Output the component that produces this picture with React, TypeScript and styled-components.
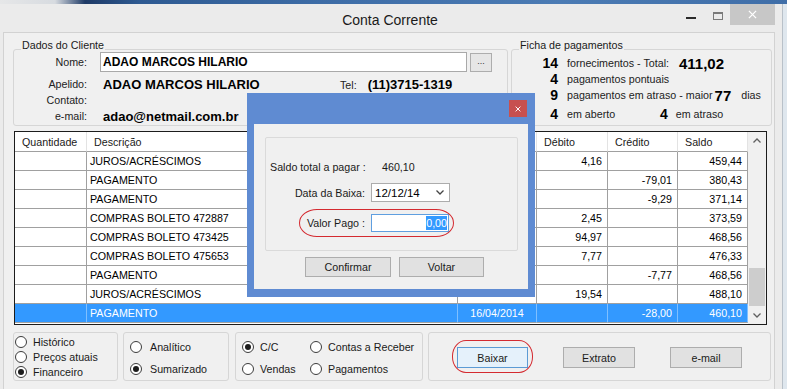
import React from "react";
import styled, { createGlobalStyle } from "styled-components";

const Global = createGlobalStyle`
  html, body { margin: 0; padding: 0; }
  body {
    width: 787px; height: 389px; overflow: hidden;
    background: #d9e2ea;
    font-family: "Liberation Sans", Arial, sans-serif;
    font-size: 10.7px; color: #000;
  }
  #root { width: 787px; height: 389px; }
`;

const Screen = styled.div`
  position: relative;
  width: 787px; height: 389px; overflow: hidden;
  display: flex; flex-direction: column;
`;

const DesktopTop = styled.div`
  height: 4px; flex: none;
  background: linear-gradient(90deg, #e6e7e8 0px, #d7dbe0 55px, #1e3a66 85px, #2e5a92 140px, #3d6ca6 320px, #4b7bb4 560px, #3f6ea8 787px);
`;

const Body = styled.div`
  flex: 1; display: flex; min-height: 0;
`;

const Window = styled.div`
  width: 783px; flex: none;
  background: #ebebeb;
  border-right: 1px solid #b9c1c9;
  box-sizing: border-box;
  display: flex; flex-direction: column;
  padding: 0 7px 0 3px;
`;

const DesktopRight = styled.div`
  flex: 1; background: #dfe7ee;
`;

const TitleBar = styled.div`
  height: 28px; flex: none;
  display: grid; grid-template-columns: 1fr auto 1fr;
  align-items: center;
`;

const Title = styled.div`
  grid-column: 2;
  font-size: 14px; color: #1a1a1a;
  padding: 4px 0 0 2px;
`;

const Controls = styled.div`
  grid-column: 3; justify-self: end; align-self: start;
  display: flex; align-items: flex-start; height: 28px;
`;

const MinGlyph = styled.span`
  width: 10px; height: 2px; background: #2a2a2a;
  margin-top: 13px; margin-right: 17px;
`;

const MaxGlyph = styled.span`
  width: 8px; height: 5px;
  border: 1px solid #7a7a7a; border-top-width: 2px;
  margin-top: 8px; margin-right: 7px;
`;

const CloseBtn = styled.span`
  width: 45px; height: 21px; background: #c7c7c7;
  display: flex; align-items: center; justify-content: center;
`;

const Client = styled.div`
  flex: 1;
  background: #f0f0f0;
  border: 1px solid #d2d2d2; border-bottom: none;
  display: flex; flex-direction: column;
`;

const TopRow = styled.div`
  display: flex; gap: 3px;
  margin-top: 16px; padding-left: 9px;
`;

const Group = styled.div<{ $w: number; $h: number; $ml?: number }>`
  position: relative; flex: none;
  width: ${(p) => p.$w}px; height: ${(p) => p.$h}px;
  margin-left: ${(p) => p.$ml || 0}px;
  box-sizing: border-box;
  border: 1px solid #d6d6d6; border-radius: 3px;
`;

const Legend = styled.span`
  position: absolute; left: 7px; top: -11px;
  line-height: 13px; padding: 0 1px;
  background: #f0f0f0; color: #1a1a1a;
`;

const Stack = styled.div<{ $pt: number }>`
  display: flex; flex-direction: column;
  padding-top: ${(p) => p.$pt}px;
`;

const FormRow = styled.div<{ $h: number; $mt?: number }>`
  display: flex; align-items: center;
  height: ${(p) => p.$h}px;
  margin-top: ${(p) => p.$mt || 0}px;
  white-space: nowrap;
`;

const Label = styled.span`
  width: 73px; flex: none; margin-right: 13px;
  text-align: right; color: #222;
`;

const TextInput = styled.div`
  width: 367px; height: 20px; box-sizing: border-box;
  border: 1px solid #a9a9a9; background: #fff;
  font-weight: bold; font-size: 12px;
  display: flex; align-items: center; padding-left: 2px;
`;

const SmallBtn = styled.div`
  width: 22px; height: 19px; box-sizing: border-box;
  margin-left: 3px;
  border: 1px solid #adadad; background: #e6e6e6;
  display: flex; align-items: center; justify-content: center;
  font-size: 9px; color: #333; padding-bottom: 3px;
`;

const BigValue = styled.span<{ $w?: number }>`
  font-weight: bold; font-size: 13px;
  padding-left: 3px;
  width: ${(p) => (p.$w ? `${p.$w}px` : "auto")};
  flex: none;
`;

const TelLabel = styled.span`
  color: #222; margin-right: 8px; margin-top: 2px;
`;

const NumCol = styled.span`
  width: 46px; flex: none; margin-right: 9px;
  text-align: right; font-weight: bold; font-size: 14px;
`;

const Num = styled.span<{ $size?: number; $ml?: number }>`
  font-weight: bold; font-size: ${(p) => p.$size || 14}px;
  margin-left: ${(p) => p.$ml || 0}px;
`;

const Txt = styled.span<{ $ml?: number; $w?: number }>`
  color: #222;
  margin-left: ${(p) => p.$ml || 0}px;
  ${(p) => (p.$w ? `width:${p.$w}px; flex:none;` : "")}
`;

const Table = styled.div`
  margin-top: 5px; margin-left: 10px;
  width: 753px; height: 194px; box-sizing: border-box;
  border: 1px solid #1c1c1c; background: #fff;
  display: flex;
`;

const Grid = styled.div`
  width: 733px; flex: none;
  display: grid;
  grid-template-columns: 72px 371px 79px 71px 70px 70px;
  grid-template-rows: 20px repeat(9, 19px);
`;

const HeadCell = styled.div`
  box-sizing: border-box;
  border-bottom: 1px solid #a0a0a0;
  border-right: 1px solid #e3e3e3;
  display: flex; align-items: center; padding-left: 7px;
  color: #1a1a1a;
`;

const Cell = styled.div<{ $right?: boolean; $center?: boolean; $sel?: boolean }>`
  box-sizing: border-box;
  border-bottom: 1px solid #a0a0a0;
  border-right: 1px solid ${(p) => (p.$sel ? "#7fbfff" : "#a0a0a0")};
  background: ${(p) => (p.$sel ? "#3399ff" : "#fff")};
  color: ${(p) => (p.$sel ? "#fff" : "#000")};
  display: flex; align-items: center;
  justify-content: ${(p) => (p.$right ? "flex-end" : p.$center ? "center" : "flex-start")};
  padding: ${(p) => (p.$right ? "0 5px 0 0" : p.$center ? "0" : "0 0 0 3px")};
  white-space: nowrap; overflow: hidden;
`;

const ScrollBar = styled.div`
  flex: 1; background: #f0f0f0;
  display: flex; flex-direction: column; align-items: center;
`;

const ScrollArrow = styled.div`
  height: 17px; width: 100%;
  display: flex; align-items: center; justify-content: center;
`;

const ScrollTrack = styled.div`
  flex: 1; width: 100%; box-sizing: border-box; padding: 0 1px;
  display: flex; flex-direction: column; justify-content: flex-end;
`;

const Thumb = styled.div`
  height: 38px; background: #cdcdcd; margin-bottom: 1px;
`;

const BottomRow = styled.div`
  display: flex; margin-top: 7px; padding-left: 9px;
`;

const RadioStack = styled.div<{ $pt: number; $pl: number; $gap: number }>`
  display: flex; flex-direction: column;
  padding-top: ${(p) => p.$pt}px; padding-left: ${(p) => p.$pl}px;
  gap: ${(p) => p.$gap}px;
`;

const RadioGrid = styled.div`
  display: grid; grid-template-columns: 68px auto;
  row-gap: 6px; padding-top: 6px; padding-left: 6px;
`;

const RadioRow = styled.label<{ $h: number }>`
  display: flex; align-items: center; height: ${(p) => p.$h}px;
  white-space: nowrap; color: #1a1a1a;
`;

const RadioCircle = styled.span<{ $on?: boolean; $gap: number }>`
  width: 12px; height: 12px; box-sizing: border-box; flex: none;
  border-radius: 50%; border: 1px solid #3c3c3c;
  background: #fff; margin-right: ${(p) => p.$gap}px;
  display: flex; align-items: center; justify-content: center;
  &::after {
    content: "";
    width: 6px; height: 6px; border-radius: 50%;
    background: ${(p) => (p.$on ? "#1c1c1c" : "transparent")};
  }
`;

const ButtonRow = styled.div`
  display: flex; padding-left: 28px; padding-top: 14px; gap: 35px;
`;

const WinButton = styled.div<{ $w: number; $h: number; $focus?: boolean }>`
  width: ${(p) => p.$w}px; height: ${(p) => p.$h}px; box-sizing: border-box;
  border: 1px solid ${(p) => (p.$focus ? "#5b9bd5" : "#adadad")};
  background: ${(p) => (p.$focus ? "#e5f1fb" : "#e1e1e1")};
  display: flex; align-items: center; justify-content: center;
  color: #1a1a1a;
`;

const Dialog = styled.div`
  position: absolute; left: 247px; top: 93px;
  width: 288px; height: 204px; box-sizing: border-box;
  background: #5f8bd2;
  padding: 31px 7px 8px 7px;
  display: flex;
`;

const DialogClose = styled.div`
  position: absolute; right: 8px; top: 7px;
  width: 18px; height: 17px; background: #c75050;
  display: flex; align-items: center; justify-content: center;
`;

const DialogInner = styled.div`
  flex: 1; background: #f0f0f0;
  padding: 13px 0 0 11px;
  display: flex; flex-direction: column;
`;

const DialogGroup = styled.div`
  width: 253px; height: 114px; box-sizing: border-box;
  border: 1px solid #dadada; border-radius: 2px;
  display: flex; flex-direction: column;
  padding: 19px 0 0 4px;
`;

const DLabel = styled.span`
  width: 95px; flex: none; margin-right: 6px;
  text-align: right; color: #1a1a1a; white-space: nowrap;
`;

const DValue = styled.span`
  padding-left: 11px; color: #1a1a1a;
`;

const Select = styled.div`
  width: 79px; height: 19px; box-sizing: border-box;
  border: 1px solid #acacac; background: #fff;
  display: flex; align-items: center; justify-content: space-between;
  padding: 0 5px 0 3px; font-size: 11.5px;
`;

const ValueInput = styled.div`
  width: 78px; height: 18px; box-sizing: border-box;
  border: 1px solid #5f9fe0; background: #fff;
  display: flex; align-items: center; justify-content: flex-end;
  padding-right: 1px;
`;

const Selected = styled.span`
  background: #3399ff; color: #fff; padding: 1px 0;
`;

const DialogButtons = styled.div`
  display: flex; gap: 8px; margin-top: 6px; padding-left: 40px;
`;

const Annotation = styled.div<{ $l: number; $t: number; $w: number; $h: number; $r: string }>`
  position: absolute;
  left: ${(p) => p.$l}px; top: ${(p) => p.$t}px;
  width: ${(p) => p.$w}px; height: ${(p) => p.$h}px;
  box-sizing: border-box;
  border: 1px solid #d42a30; border-radius: ${(p) => p.$r};
  pointer-events: none;
`;

type Row = { d: string; dt?: string; deb?: string; cred?: string; saldo: string; sel?: boolean };
const rows: Row[] = [
  { d: "JUROS/ACRÉSCIMOS", deb: "4,16", saldo: "459,44" },
  { d: "PAGAMENTO", cred: "-79,01", saldo: "380,43" },
  { d: "PAGAMENTO", cred: "-9,29", saldo: "371,14" },
  { d: "COMPRAS BOLETO 472887", deb: "2,45", saldo: "373,59" },
  { d: "COMPRAS BOLETO 473425", deb: "94,97", saldo: "468,56" },
  { d: "COMPRAS BOLETO 475653", deb: "7,77", saldo: "476,33" },
  { d: "PAGAMENTO", cred: "-7,77", saldo: "468,56" },
  { d: "JUROS/ACRÉSCIMOS", deb: "19,54", saldo: "488,10" },
  { d: "PAGAMENTO", dt: "16/04/2014", cred: "-28,00", saldo: "460,10", sel: true },
];

const Chevron = ({ up, color = "#606060" }: { up?: boolean; color?: string }) => (
  <svg width="8" height="5" viewBox="0 0 8 5">
    <path d={up ? "M0.5 4.5 L4 1 L7.5 4.5" : "M0.5 0.5 L4 4 L7.5 0.5"} fill="none" stroke={color} strokeWidth="1.3" />
  </svg>
);

const XGlyph = ({ size, w }: { size: number; w: number }) => (
  <svg width={size} height={size} viewBox="0 0 10 10">
    <path d="M1 1 L9 9 M9 1 L1 9" stroke="#fff" strokeWidth={w} />
  </svg>
);

export default function App() {
  return (
    <Screen>
      <Global />
      <DesktopTop />
      <Body>
        <Window>
          <TitleBar>
            <Title>Conta Corrente</Title>
            <Controls>
              <MinGlyph />
              <MaxGlyph />
              <CloseBtn>
                <XGlyph size={9} w={1.4} />
              </CloseBtn>
            </Controls>
          </TitleBar>
          <Client>
            <TopRow>
              <Group $w={495} $h={77}>
                <Legend>Dados do Cliente</Legend>
                <Stack $pt={2}>
                  <FormRow $h={20}>
                    <Label>Nome:</Label>
                    <TextInput>ADAO MARCOS HILARIO</TextInput>
                    <SmallBtn>...</SmallBtn>
                  </FormRow>
                  <FormRow $h={16} $mt={4}>
                    <Label>Apelido:</Label>
                    <BigValue $w={237}>ADAO MARCOS HILARIO</BigValue>
                    <TelLabel>Tel:</TelLabel>
                    <BigValue>(11)3715-1319</BigValue>
                  </FormRow>
                  <FormRow $h={16}>
                    <Label>Contato:</Label>
                  </FormRow>
                  <FormRow $h={16}>
                    <Label>e-mail:</Label>
                    <BigValue>adao@netmail.com.br</BigValue>
                  </FormRow>
                </Stack>
              </Group>
              <Group $w={261} $h={77}>
                <Legend>Ficha de pagamentos</Legend>
                <Stack $pt={5}>
                  <FormRow $h={16}>
                    <NumCol>14</NumCol>
                    <Txt>fornecimentos - Total:</Txt>
                    <Num $size={15} $ml={10}>411,02</Num>
                  </FormRow>
                  <FormRow $h={15}>
                    <NumCol>4</NumCol>
                    <Txt>pagamentos pontuais</Txt>
                  </FormRow>
                  <FormRow $h={18}>
                    <NumCol>9</NumCol>
                    <Txt>pagamentos em atraso - maior</Txt>
                    <Num $size={15} $ml={2}>77</Num>
                    <Txt $ml={10}>dias</Txt>
                  </FormRow>
                  <FormRow $h={19}>
                    <NumCol>4</NumCol>
                    <Txt $w={85}>em aberto</Txt>
                    <Num $ml={8}>4</Num>
                    <Txt $ml={8}>em atraso</Txt>
                  </FormRow>
                </Stack>
              </Group>
            </TopRow>

            <Table>
              <Grid>
                <HeadCell>Quantidade</HeadCell>
                <HeadCell>Descrição</HeadCell>
                <HeadCell>Data</HeadCell>
                <HeadCell>Débito</HeadCell>
                <HeadCell>Crédito</HeadCell>
                <HeadCell>Saldo</HeadCell>
                {rows.map((r, i) => (
                  <React.Fragment key={i}>
                    <Cell $sel={r.sel} />
                    <Cell $sel={r.sel}>{r.d}</Cell>
                    <Cell $sel={r.sel} $center>{r.dt}</Cell>
                    <Cell $sel={r.sel} $right>{r.deb}</Cell>
                    <Cell $sel={r.sel} $right>{r.cred}</Cell>
                    <Cell $sel={r.sel} $right>{r.saldo}</Cell>
                  </React.Fragment>
                ))}
              </Grid>
              <ScrollBar>
                <ScrollArrow>
                  <Chevron up />
                </ScrollArrow>
                <ScrollTrack>
                  <Thumb />
                </ScrollTrack>
                <ScrollArrow>
                  <Chevron />
                </ScrollArrow>
              </ScrollBar>
            </Table>

            <BottomRow>
              <Group $w={105} $h={49}>
                <RadioStack $pt={1} $pl={1} $gap={0}>
                  <RadioRow $h={15}><RadioCircle $gap={6} />Histórico</RadioRow>
                  <RadioRow $h={15}><RadioCircle $gap={6} />Preços atuais</RadioRow>
                  <RadioRow $h={15}><RadioCircle $gap={6} $on />Financeiro</RadioRow>
                </RadioStack>
              </Group>
              <Group $w={106} $h={49} $ml={5}>
                <RadioStack $pt={6} $pl={6} $gap={6}>
                  <RadioRow $h={16}><RadioCircle $gap={8} />Analítico</RadioRow>
                  <RadioRow $h={16}><RadioCircle $gap={8} $on />Sumarizado</RadioRow>
                </RadioStack>
              </Group>
              <Group $w={188} $h={49} $ml={6}>
                <RadioGrid>
                  <RadioRow $h={16}><RadioCircle $gap={6} $on />C/C</RadioRow>
                  <RadioRow $h={16}><RadioCircle $gap={6} />Contas a Receber</RadioRow>
                  <RadioRow $h={16}><RadioCircle $gap={6} />Vendas</RadioRow>
                  <RadioRow $h={16}><RadioCircle $gap={6} />Pagamentos</RadioRow>
                </RadioGrid>
              </Group>
              <Group $w={343} $h={49} $ml={5}>
                <ButtonRow>
                  <WinButton $w={71} $h={21} $focus>Baixar</WinButton>
                  <WinButton $w={72} $h={21}>Extrato</WinButton>
                  <WinButton $w={72} $h={21}>e-mail</WinButton>
                </ButtonRow>
              </Group>
            </BottomRow>
          </Client>
        </Window>
        <DesktopRight />
      </Body>

      <Dialog>
        <DialogClose>
          <XGlyph size={6} w={1.6} />
        </DialogClose>
        <DialogInner>
          <DialogGroup>
            <FormRow $h={20}>
              <DLabel>Saldo total a pagar :</DLabel>
              <DValue>460,10</DValue>
            </FormRow>
            <FormRow $h={19} $mt={6}>
              <DLabel>Data da Baixa:</DLabel>
              <Select>
                12/12/14
                <Chevron color="#444" />
              </Select>
            </FormRow>
            <FormRow $h={18} $mt={12}>
              <DLabel>Valor Pago :</DLabel>
              <ValueInput>
                <Selected>0,00</Selected>
              </ValueInput>
            </FormRow>
          </DialogGroup>
          <DialogButtons>
            <WinButton $w={86} $h={20}>Confirmar</WinButton>
            <WinButton $w={85} $h={20}>Voltar</WinButton>
          </DialogButtons>
        </DialogInner>
      </Dialog>

      <Annotation $l={299} $t={209} $w={155} $h={28} $r="18px / 14px" />
      <Annotation $l={452} $t={340} $w={81} $h={33} $r="14px / 16px" />
    </Screen>
  );
}
